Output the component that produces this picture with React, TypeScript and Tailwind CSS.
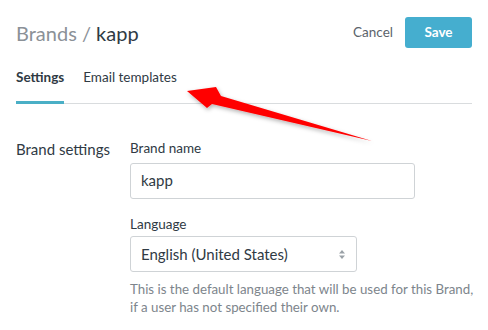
export default function App() {
  return (
    <div className="relative h-[330px] w-[488px] overflow-hidden bg-white font-['Lato',sans-serif] text-[#2f3a44]">
      <div className="px-4">
        <div className="flex h-[64px] items-center justify-between pt-[1px]">
          <h1 className="text-[20px] leading-none">
            <span className="text-[#8b9197]">Brands / </span>
            <span className="text-[#2f3a44]">kapp</span>
          </h1>
          <div className="flex items-center gap-3">
            <button className="px-0 text-[13.5px] text-[#5b636b]">Cancel</button>
            <button className="h-[31px] w-[67px] rounded-[3px] bg-[#45aecf] text-[13.5px] font-bold text-white">
              Save
            </button>
          </div>
        </div>
        <div className="mt-[3px] flex border-b border-[#d9dcde]">
          <div className="-mb-[1px] border-b-[3px] border-[#4aafc6] pb-[14px] text-[13.5px] leading-[20px] font-bold text-[#2f3a44]">
            Settings
          </div>
          <div className="ml-[19px] pb-[14px] text-[13.5px] leading-[20px] text-[#2f3a44]">Email templates</div>
        </div>
        <div className="mt-[38px] flex">
          <div className="w-[114px] shrink-0 text-[15px] leading-none">Brand settings</div>
          <div className="flex flex-col">
            <label className="text-[13.5px] leading-none">Brand name</label>
            <div className="mt-[7px] flex h-[36px] w-[285px] items-center rounded-[3px] border border-[#cfd3d6] px-[10px] text-[15px]">
              kapp
            </div>
            <label className="mt-[19px] text-[13.5px] leading-none">Language</label>
            <div className="mt-[5px] flex h-[36px] w-[227px] items-center justify-between rounded-[3px] border border-[#cfd3d6] px-[10px] text-[15px]">
              <span>English (United States)</span>
              <svg width="6" height="9" viewBox="0 0 6 9" className="mr-[1px]">
                <path d="M3 0 L6 3.5 H0 Z" fill="#9aa1a7" />
                <path d="M3 9 L6 5.5 H0 Z" fill="#9aa1a7" />
              </svg>
            </div>
            <p className="mt-[8px] w-[350px] text-[13.3px] leading-[18px] text-[#7d858c]">
              This is the default language that will be used for this Brand,
              <br />
              if a user has not specified their own.
            </p>
          </div>
        </div>
      </div>
      <svg className="pointer-events-none absolute left-0 top-0" width="488" height="330">
        <defs>
          <filter id="sh" x="-20%" y="-50%" width="140%" height="200%">
            <feDropShadow dx="1" dy="2" stdDeviation="2" floodColor="#000" floodOpacity="0.3" />
          </filter>
        </defs>
        <polygon points="187,91 216,87 221,96 372,141 212,104 207,108" fill="#ff0000" filter="url(#sh)" />
      </svg>
    </div>
  );
}
